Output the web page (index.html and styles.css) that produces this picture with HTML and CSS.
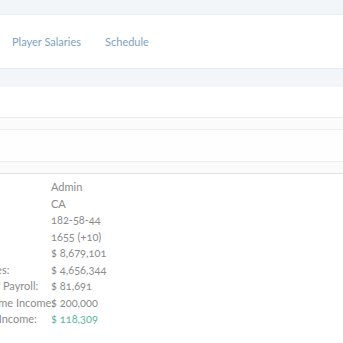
FILE: index.html
```html
<!DOCTYPE html>
<html>
<head>
<meta charset="utf-8">
<link rel="stylesheet" href="styles.css">
</head>
<body>
<div class="topbar"></div>
<nav class="nav">
  <a class="nav-link">Player Salaries</a>
  <a class="nav-link">Schedule</a>
</nav>
<div class="band"></div>
<div class="panel"></div>
<div class="row row-shade"></div>
<div class="row row-tall"></div>
<div class="row row-shade row-last"></div>
<dl class="stats">
  <dt>Owner:</dt><dd>Admin</dd>
  <dt>Region:</dt><dd>CA</dd>
  <dt>Record:</dt><dd>182-58-44</dd>
  <dt>Rating:</dt><dd>1655 (+10)</dd>
  <dt>Cash:</dt><dd>$ 8,679,101</dd>
  <dt>Player Expenses:</dt><dd>$ 4,656,344</dd>
  <dt>Projected Staff  Payroll:</dt><dd>$ 81,691</dd>
  <dt>Avg. Home Game Income:</dt><dd>$ 200,000</dd>
  <dt>Projected Net Income:</dt><dd class="pos">$ 118,309</dd>
</dl>
</body>
</html>
```
FILE: styles.css
```css
html, body {
  margin: 0;
  padding: 0;
  background: #ffffff;
  font-family: "Lato", "Noto Sans", sans-serif;
  font-variant-numeric: oldstyle-nums;
  font-size: 11px;
  color: #8c8c8c;
}
.topbar {
  height: 14px;
  background: #f3f6f9;
  border-bottom: 1px solid #e6ecf1;
}
.nav {
  height: 53px;
  display: flex;
  align-items: center;
  gap: 24px;
  padding: 0 12px 1px;
  box-sizing: border-box;
}
.nav-link {
  color: #7ea2c1;
  font-size: 11px;
}
.band {
  height: 18px;
  background: #f3f6f9;
  border-top: 1px solid #e6ecf1;
}
.panel {
  height: 30px;
  border-bottom: 1px solid #ececec;
}
.row {
  border-bottom: 1px solid #ececec;
}
.row-shade {
  height: 11px;
  background: #fbfbfb;
}
.row-tall {
  height: 31px;
  background: #fefefe;
}
.row-last {
  border-bottom-color: #e2e2e2;
}
.stats {
  display: grid;
  grid-template-columns: 122px auto;
  margin: 5px 0 0 -71px;
  line-height: 16.5px;
}
.stats dt, .stats dd {
  margin: 0;
  white-space: nowrap;
}
.stats dt {
  color: #8c8c8c;
}
.stats dd {
  color: #8c8c8c;
}
.stats dd.pos {
  color: #5cb7a0;
}
```
